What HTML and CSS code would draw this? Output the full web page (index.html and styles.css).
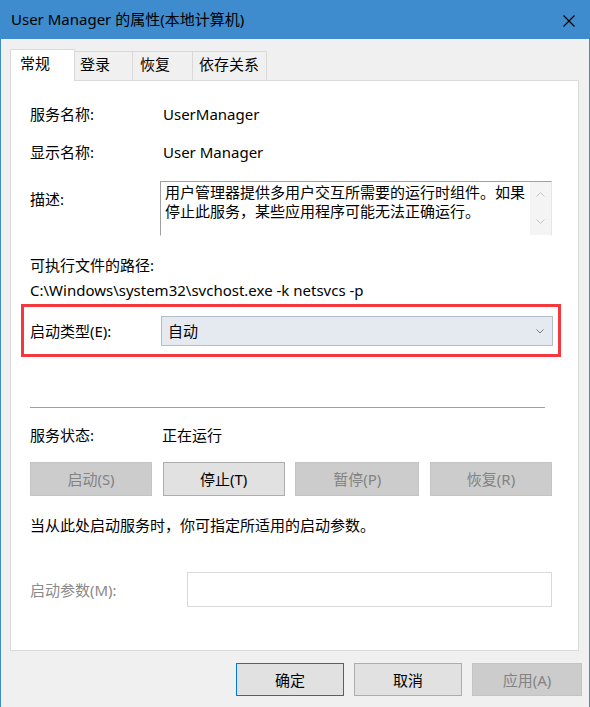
FILE: index.html
```html
<!DOCTYPE html>
<html lang="zh-CN">
<head>
<meta charset="utf-8">
<title>User Manager 的属性(本地计算机)</title>
<link rel="stylesheet" href="styles.css">
</head>
<body>
<div class="window">
  <div class="titlebar">
    <span class="title">User Manager 的属性(本地计算机)</span>
    <svg class="close" width="12" height="12" viewBox="0 0 12 12"><path d="M0.5 0.5 L11.5 11.5 M11.5 0.5 L0.5 11.5" stroke="#000" stroke-width="1.1" fill="none"/></svg>
  </div>
  <div class="tabs">
    <div class="tab active t1">常规</div>
    <div class="tab t2">登录</div>
    <div class="tab t3">恢复</div>
    <div class="tab t4">依存关系</div>
  </div>
  <div class="panel">
    <div class="row r-name"><span class="lbl w133">服务名称:</span><span>UserManager</span></div>
    <div class="row r-disp"><span class="lbl w133">显示名称:</span><span>User Manager</span></div>
    <div class="row r-desc">
      <span class="lbl w130 desc-lbl">描述:</span>
      <div class="descbox">
        <div class="desctext">用户管理器提供多用户交互所需要的运行时组件。如果停止此服务，某些应用程序可能无法正确运行。</div>
        <div class="scroll">
          <svg width="9" height="5" viewBox="0 0 9 5"><path d="M0.5 4.5 L4.5 0.5 L8.5 4.5" stroke="#c2c2c2" fill="none"/></svg>
          <svg width="9" height="5" viewBox="0 0 9 5"><path d="M0.5 0.5 L4.5 4.5 L8.5 0.5" stroke="#c2c2c2" fill="none"/></svg>
        </div>
      </div>
    </div>
    <div class="row r-pathlbl">可执行文件的路径:</div>
    <div class="row r-path">C:\Windows\system32\svchost.exe -k netsvcs -p</div>
    <div class="redbox">
      <span class="lbl w131">启动类型(E):</span>
      <div class="combo"><span>自动</span>
        <svg width="8" height="5" viewBox="0 0 8 5"><path d="M0.5 0.5 L4 4 L7.5 0.5" stroke="#7a7a7a" fill="none"/></svg>
      </div>
    </div>
    <div class="sep"></div>
    <div class="row r-status"><span class="lbl w132">服务状态:</span><span>正在运行</span></div>
    <div class="btnrow">
      <div class="btn disabled">启动(S)</div>
      <div class="btn">停止(T)</div>
      <div class="btn disabled wide">暂停(P)</div>
      <div class="btn disabled">恢复(R)</div>
    </div>
    <div class="row r-note">当从此处启动服务时，你可指定所适用的启动参数。</div>
    <div class="r-param">
      <span class="lbl w157 gray">启动参数(M):</span>
      <div class="input"></div>
    </div>
  </div>
  <div class="footer">
    <div class="btn fbtn default">确定</div>
    <div class="btn fbtn">取消</div>
    <div class="btn fbtn disabled">应用(A)</div>
  </div>
</div>
</body>
</html>
```
FILE: styles.css
```css
* { box-sizing: border-box; }
html, body { margin: 0; padding: 0; }
body {
  width: 590px;
  height: 707px;
  overflow: hidden;
  background: #f0f0f0;
  font-family: "Segoe UI", "Noto Sans", "Noto Sans CJK SC", sans-serif;
  font-size: 15px;
  line-height: 20px;
  color: #000;
}
.window {
  width: 590px;
  height: 707px;
  border-left: 1px solid #3e8bce;
  border-right: 1px solid #3e8bce;
  background: #f0f0f0;
}
.titlebar {
  height: 39px;
  background: #3e8bce;
  display: flex;
  align-items: center;
  justify-content: space-between;
  padding: 0 14px 0 10px;
}
.title { font-size: 15px; color: #000; margin-top: -1px; }
.close { display: block; margin-top: 2px; }

.tabs {
  display: flex;
  align-items: flex-end;
  height: 31px;
  margin: 10px 0 0 9px;
}
.tab {
  height: 29px;
  background: #f0f0f0;
  border-top: 1px solid #d9d9d9;
  border-right: 1px solid #d9d9d9;
  padding-top: 2px;
}
.tab.active {
  height: 32px;
  margin-bottom: -1px;
  background: #fff;
  border: 1px solid #d9d9d9;
  border-bottom: none;
  padding: 3px 0 0 9px;
  position: relative;
  z-index: 1;
}
.t1 { width: 65px; }
.t2 { width: 58px; padding-left: 5px; }
.t3 { width: 60px; padding-left: 7px; }
.t4 { width: 74px; padding-left: 6px; }

.panel {
  margin-left: 9px;
  width: 569px;
  height: 571px;
  background: #fff;
  border: 1px solid #d9d9d9;
  padding: 0 26px 0 19px;
}
.row { display: flex; height: 20px; white-space: nowrap; }
.lbl { flex: none; }
.w130 { width: 130px; }
.w131 { width: 131px; }
.w132 { width: 132px; }
.w133 { width: 133px; }
.w157 { width: 157px; }
.gray { color: #8a8a8a; }
.r-name { margin-top: 23px; }
.r-disp { margin-top: 18px; }
.r-desc { margin-top: 19px; height: 55px; }
.desc-lbl { padding-top: 8px; }
.descbox {
  width: 392px;
  height: 55px;
  border-top: 1px solid #a0a0a0;
  border-left: 1px solid #a0a0a0;
  border-right: 1px solid #e6e6e6;
  border-bottom: 1px solid #ffffff;
  display: flex;
}
.desctext {
  flex: 1;
  white-space: normal;
  padding: 1px 0 0 4px;
  line-height: 19px;
}
.scroll {
  width: 21px;
  flex: none;
  background: #f4f4f4;
  display: flex;
  flex-direction: column;
  align-items: center;
  justify-content: space-between;
  padding: 10px 0 11px;
}
.scroll svg { display: block; }
.r-pathlbl { margin-top: 19px; }
.r-path { margin-top: 5px; }
.redbox {
  margin: 4px -9px 0 -9px;
  height: 53px;
  border: 3px solid #f5383d;
  display: flex;
  align-items: center;
  padding: 1px 5px 0 6px;
}
.combo {
  flex: 1;
  height: 30px;
  background: #e4eaf0;
  border: 1px solid #b3bdc8;
  display: flex;
  align-items: center;
  justify-content: space-between;
  padding: 0 8px 0 6px;
}
.combo svg { display: block; }
.sep {
  margin-top: 50px;
  width: 515px;
  height: 1px;
  background: #a0a0a0;
}
.r-status { margin-top: 17px; }
.btnrow {
  margin-top: 17px;
  display: flex;
  justify-content: space-between;
}
.btn {
  width: 122px;
  height: 34px;
  background: #e1e1e1;
  border: 1px solid #adadad;
  display: flex;
  align-items: center;
  justify-content: center;
  color: #000;
}
.btn.wide { width: 124px; }
.btn.disabled {
  background: #cccccc;
  border-color: #c4c4c4;
  color: #838383;
}
.r-note { margin-top: 19px; }
.r-param {
  margin-top: 37px;
  display: flex;
  align-items: center;
}
.input {
  flex: 1;
  height: 35px;
  background: #fff;
  border: 1px solid #d9d9d9;
}
.footer {
  display: flex;
  justify-content: flex-end;
  gap: 10px;
  margin-top: 12px;
  padding-right: 7px;
}
.fbtn { width: 108px; height: 33px; }
.fbtn.default { border-color: #0078d7; }
.fbtn.disabled { width: 110px; }
```
